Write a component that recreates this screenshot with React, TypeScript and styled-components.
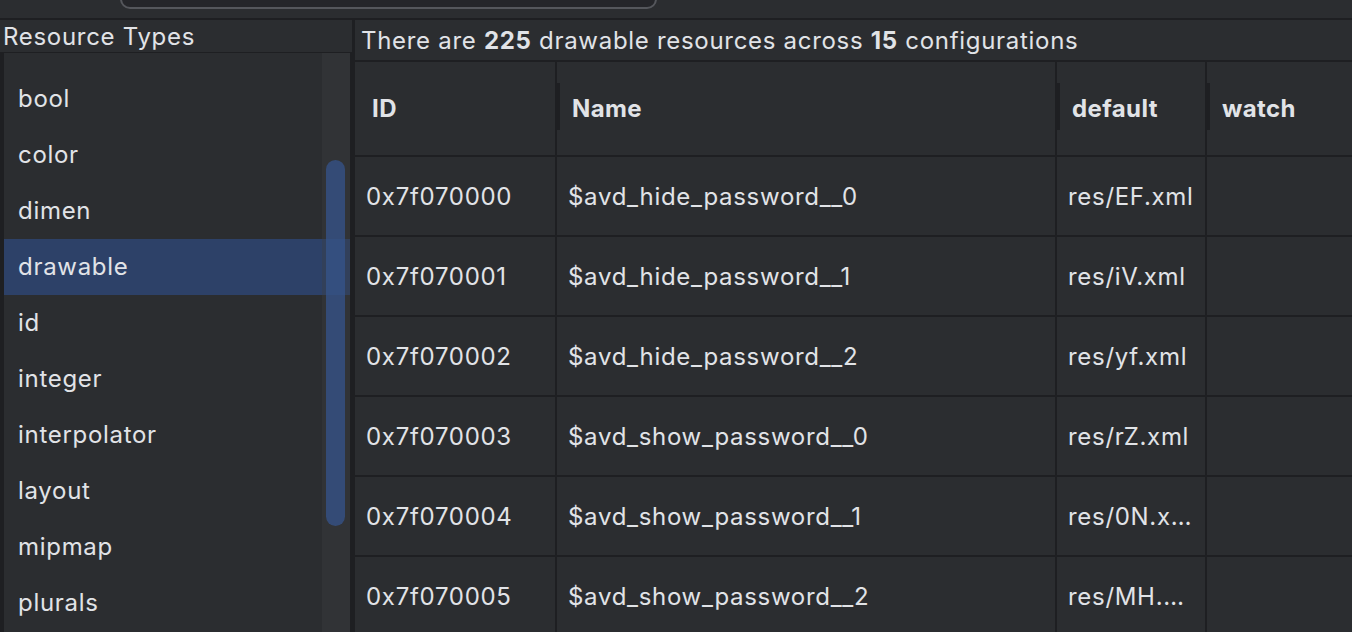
import React from "react";
import styled, { createGlobalStyle } from "styled-components";

const GlobalStyle = createGlobalStyle`
  html, body {
    margin: 0;
    padding: 0;
    background: #1e1f22;
    overflow: hidden;
  }
  body {
    font-family: Inter, "Noto Sans", "Liberation Sans", sans-serif;
    color: #e1e3e7;
    letter-spacing: 0.7px;
  }
`;

const Page = styled.div`
  width: 1352px;
  height: 632px;
  display: flex;
  flex-direction: column;
  background: #1e1f22;
  overflow: hidden;
`;

const TopBar = styled.div`
  height: 18px;
  background: #2b2d30;
  padding-left: 120px;
  overflow: hidden;
  margin-bottom: 2px;
`;

const SearchField = styled.div`
  width: 533px;
  height: 30px;
  margin-top: -25px;
  border: 2px solid #55575c;
  border-radius: 10px;
  background: #25262a;
`;

const Main = styled.div`
  flex: 1;
  display: grid;
  grid-template-columns: 352px 1fr;
  column-gap: 3px;
  min-height: 0;
`;

const Sidebar = styled.div`
  display: flex;
  flex-direction: column;
  gap: 1px;
  min-height: 0;
`;

const PanelTitle = styled.div`
  height: 32px;
  background: #2b2d30;
  font-size: 24px;
  line-height: 34px;
  padding-left: 3px;
  white-space: nowrap;
`;

const TypeList = styled.div`
  position: relative;
  flex: 1;
  margin-left: 4px;
  margin-right: 2px;
  padding-top: 18px;
  background: #2b2d30;
  overflow: hidden;
`;

const TypeItem = styled.div<{ $selected?: boolean }>`
  height: 56px;
  line-height: 56px;
  padding-left: 14px;
  font-size: 24px;
  background: ${(p) => (p.$selected ? "#2d4168" : "transparent")};
`;

const ScrollTrack = styled.div`
  position: absolute;
  top: 0;
  bottom: 0;
  right: 0;
  width: 28px;
  background: rgba(60, 62, 67, 0.35);
`;

const ScrollThumb = styled.div`
  position: absolute;
  top: 107px;
  left: 4px;
  width: 19px;
  height: 366px;
  border-radius: 10px;
  background: rgba(54, 84, 140, 0.75);
`;

const Content = styled.div`
  display: flex;
  flex-direction: column;
  gap: 2px;
  min-height: 0;
`;

const Summary = styled(PanelTitle)`
  height: 40px;
  line-height: 42px;
  padding-left: 6px;
  b {
    font-weight: 700;
  }
`;

const Table = styled.div`
  flex: 1;
  display: grid;
  grid-template-columns: 200px 498px 148px 1fr;
  grid-auto-rows: 78px;
  grid-template-rows: 93px;
  gap: 2px;
  background: #1e1f22;
  align-content: start;
`;

const HeadCell = styled.div<{ $divider?: boolean }>`
  background: #2b2d30;
  display: flex;
  align-items: center;
  padding-left: ${(p) => (p.$divider ? 15 : 17)}px;
  font-size: 24px;
  font-weight: 700;
  letter-spacing: 0.4px;
  position: relative;
  &::before {
    content: "";
    display: ${(p) => (p.$divider ? "block" : "none")};
    position: absolute;
    left: 0;
    top: 21px;
    width: 3px;
    height: 47px;
    background: #1e1f22;
  }
`;

const Cell = styled.div`
  background: #2b2d30;
  display: flex;
  align-items: center;
  padding: 0 8px 0 11px;
  font-size: 24px;
  min-width: 0;
`;

const CellText = styled.span`
  overflow: hidden;
  white-space: nowrap;
  text-overflow: ellipsis;
`;

const types = [
  "bool",
  "color",
  "dimen",
  "drawable",
  "id",
  "integer",
  "interpolator",
  "layout",
  "mipmap",
  "plurals",
  "string",
];

const rows = [
  ["0x7f070000", "$avd_hide_password__0", "res/EF.xml"],
  ["0x7f070001", "$avd_hide_password__1", "res/iV.xml"],
  ["0x7f070002", "$avd_hide_password__2", "res/yf.xml"],
  ["0x7f070003", "$avd_show_password__0", "res/rZ.xml"],
  ["0x7f070004", "$avd_show_password__1", "res/0N.xml"],
  ["0x7f070005", "$avd_show_password__2", "res/MH.xml"],
];

const App: React.FC = () => {
  return (
    <Page>
      <GlobalStyle />
      <TopBar>
        <SearchField />
      </TopBar>
      <Main>
        <Sidebar>
          <PanelTitle>Resource Types</PanelTitle>
          <TypeList>
            {types.map((t) => (
              <TypeItem key={t} $selected={t === "drawable"}>
                {t}
              </TypeItem>
            ))}
            <ScrollTrack>
              <ScrollThumb />
            </ScrollTrack>
          </TypeList>
        </Sidebar>
        <Content>
          <Summary>
            There are <b>225</b> drawable resources across <b>15</b>{" "}
            configurations
          </Summary>
          <Table>
            <HeadCell>ID</HeadCell>
            <HeadCell $divider>Name</HeadCell>
            <HeadCell $divider>default</HeadCell>
            <HeadCell $divider>watch</HeadCell>
            {rows.map(([id, name, file]) => (
              <React.Fragment key={id}>
                <Cell>
                  <CellText>{id}</CellText>
                </Cell>
                <Cell>
                  <CellText>{name}</CellText>
                </Cell>
                <Cell>
                  <CellText>{file}</CellText>
                </Cell>
                <Cell />
              </React.Fragment>
            ))}
          </Table>
        </Content>
      </Main>
    </Page>
  );
};

export default App;
